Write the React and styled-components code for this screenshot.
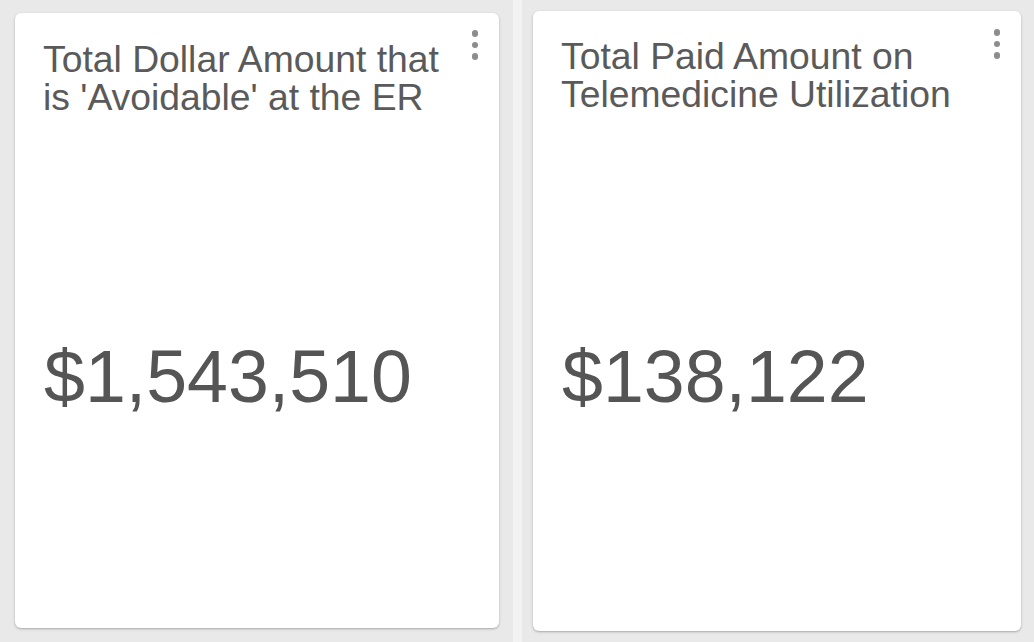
import React from "react";
import styled, { createGlobalStyle } from "styled-components";

const Global = createGlobalStyle`
  html, body { margin: 0; padding: 0; background: #f1f1f1; }
  body { font-family: "Liberation Sans", Arial, Helvetica, sans-serif; }
  #root { width: 1034px; height: 642px; overflow: hidden; }
`;

const Page = styled.div`
  display: flex;
  gap: 9px;
  width: 1034px;
  height: 642px;
  background: #f2f2f2;
`;

const Column = styled.div`
  flex: 0 0 ${(p) => p.$w}px;
  box-sizing: border-box;
  padding: ${(p) => p.$pad};
  background: #e9e9e9;
  display: flex;
`;

const Card = styled.div`
  position: relative;
  flex: 1;
  background: #fff;
  border-radius: 6px;
  box-shadow: 0 1px 3px rgba(0, 0, 0, 0.22), 0 1px 1px rgba(0, 0, 0, 0.08);
  display: flex;
  flex-direction: column;
  padding: ${(p) => p.$padTop}px 50px 0 28px;
`;

const Title = styled.div`
  font-family: "Liberation Sans", Arial, Helvetica, sans-serif;
  font-size: 37.3px;
  line-height: 38px;
  color: #5a5a5a;
  white-space: nowrap;
`;

const Body = styled.div`
  flex: 1;
  display: flex;
  align-items: center;
  padding-top: 10px;
`;

const Value = styled.div`
  font-family: "Liberation Sans", Arial, Helvetica, sans-serif;
  font-size: 73.5px;
  line-height: 74px;
  color: #555;
  margin-left: 1px;
`;

const Menu = styled.div`
  position: absolute;
  top: ${(p) => p.$top}px;
  right: 21px;
  display: flex;
  flex-direction: column;
  gap: 5px;
`;

const Dot = styled.span`
  width: 6.5px;
  height: 6.5px;
  border-radius: 50%;
  background: #8c8c8c;
`;

function Kebab({ top }) {
  return (
    <Menu $top={top}>
      <Dot />
      <Dot />
      <Dot />
    </Menu>
  );
}

export default function App() {
  return (
    <>
      <Global />
      <Page>
        <Column $w={513} $pad="13px 14px 14px 15px">
          <Card $padTop={27}>
            <Kebab top={17} />
            <Title>
              Total Dollar Amount that
              <br />
              is 'Avoidable' at the ER
            </Title>
            <Body>
              <Value>$1,543,510</Value>
            </Body>
          </Card>
        </Column>
        <Column $w={512} $pad="11px 13px 11px 11px">
          <Card $padTop={26}>
            <Kebab top={18} />
            <Title>
              Total Paid Amount on
              <br />
              Telemedicine Utilization
            </Title>
            <Body>
              <Value>$138,122</Value>
            </Body>
          </Card>
        </Column>
      </Page>
    </>
  );
}
